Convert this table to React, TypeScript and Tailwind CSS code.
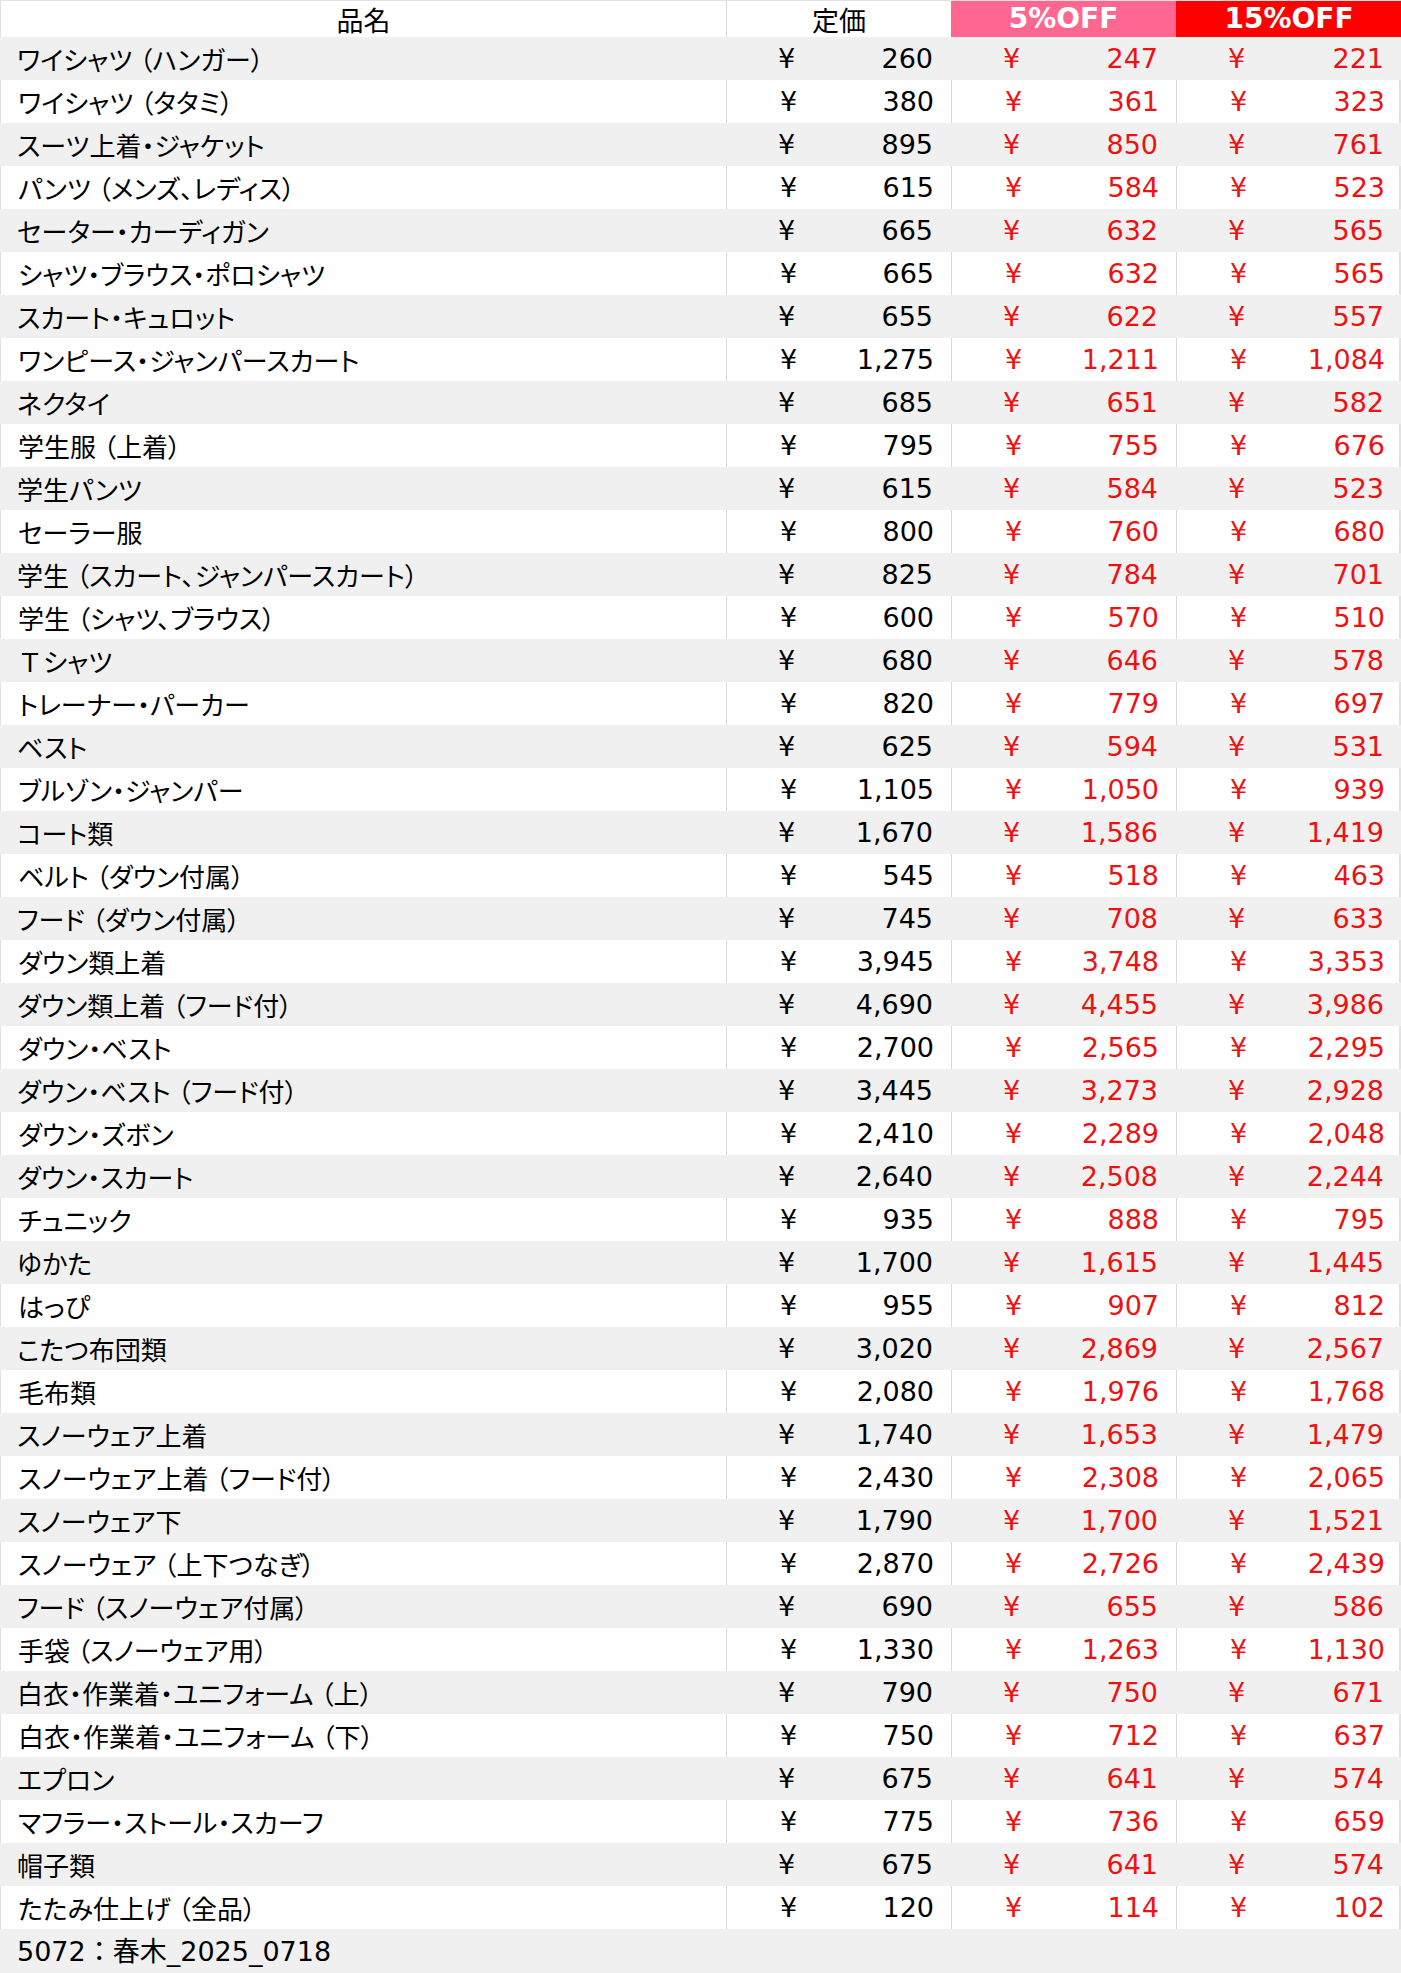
import React from "react";

type Row = [string, string, string, string];

const rows: Row[] = [
  ["ワイシャツ（ハンガー）", "260", "247", "221"],
  ["ワイシャツ（タタミ）", "380", "361", "323"],
  ["スーツ上着・ジャケット", "895", "850", "761"],
  ["パンツ（メンズ、レディス）", "615", "584", "523"],
  ["セーター・カーディガン", "665", "632", "565"],
  ["シャツ・ブラウス・ポロシャツ", "665", "632", "565"],
  ["スカート・キュロット", "655", "622", "557"],
  ["ワンピース・ジャンパースカート", "1,275", "1,211", "1,084"],
  ["ネクタイ", "685", "651", "582"],
  ["学生服（上着）", "795", "755", "676"],
  ["学生パンツ", "615", "584", "523"],
  ["セーラー服", "800", "760", "680"],
  ["学生（スカート、ジャンパースカート）", "825", "784", "701"],
  ["学生（シャツ、ブラウス）", "600", "570", "510"],
  ["Ｔシャツ", "680", "646", "578"],
  ["トレーナー・パーカー", "820", "779", "697"],
  ["ベスト", "625", "594", "531"],
  ["ブルゾン・ジャンパー", "1,105", "1,050", "939"],
  ["コート類", "1,670", "1,586", "1,419"],
  ["ベルト（ダウン付属）", "545", "518", "463"],
  ["フード（ダウン付属）", "745", "708", "633"],
  ["ダウン類上着", "3,945", "3,748", "3,353"],
  ["ダウン類上着（フード付）", "4,690", "4,455", "3,986"],
  ["ダウン・ベスト", "2,700", "2,565", "2,295"],
  ["ダウン・ベスト（フード付）", "3,445", "3,273", "2,928"],
  ["ダウン・ズボン", "2,410", "2,289", "2,048"],
  ["ダウン・スカート", "2,640", "2,508", "2,244"],
  ["チュニック", "935", "888", "795"],
  ["ゆかた", "1,700", "1,615", "1,445"],
  ["はっぴ", "955", "907", "812"],
  ["こたつ布団類", "3,020", "2,869", "2,567"],
  ["毛布類", "2,080", "1,976", "1,768"],
  ["スノーウェア上着", "1,740", "1,653", "1,479"],
  ["スノーウェア上着（フード付）", "2,430", "2,308", "2,065"],
  ["スノーウェア下", "1,790", "1,700", "1,521"],
  ["スノーウェア（上下つなぎ）", "2,870", "2,726", "2,439"],
  ["フード（スノーウェア付属）", "690", "655", "586"],
  ["手袋（スノーウェア用）", "1,330", "1,263", "1,130"],
  ["白衣・作業着・ユニフォーム（上）", "790", "750", "671"],
  ["白衣・作業着・ユニフォーム（下）", "750", "712", "637"],
  ["エプロン", "675", "641", "574"],
  ["マフラー・ストール・スカーフ", "775", "736", "659"],
  ["帽子類", "675", "641", "574"],
  ["たたみ仕上げ（全品）", "120", "114", "102"],
];

const jp = "font-['Noto_Sans_CJK_JP',sans-serif] [font-feature-settings:'palt']";
const num = "font-['DejaVu_Sans','Noto_Sans_CJK_JP',sans-serif]";

function Name({ text }: { text: string }) {
  const parts = text.split(/(（|Ｔ)/);
  return (
    <>
      {parts.map((p, i) =>
        p === "（" ? (
          <span key={i} className="ml-[7px]">
            {p}
          </span>
        ) : p === "Ｔ" ? (
          <span key={i} className="[font-feature-settings:normal]">
            {p}
          </span>
        ) : (
          <span key={i}>{p}</span>
        )
      )}
    </>
  );
}

function Price({ value, red, border }: { value: string; red?: boolean; border: boolean }) {
  return (
    <div
      className={`flex items-center justify-between pl-[53px] pr-[17px] text-[27px] leading-none ${num} ${
        red ? "text-[#ee1111]" : "text-black"
      } ${border ? "border-l border-[#dadada]" : ""}`}
    >
      <span>¥</span>
      <span>{value}</span>
    </div>
  );
}

export default function App() {
  return (
    <div className="w-[1401px] h-[1973px] bg-[#f0f0f0] flex flex-col">
      <div className="grid grid-cols-[725px_225px_225px_226px] h-[37px] bg-white border-t border-[#e2e2e2] border-l border-r-2">
        <div className={`flex items-center justify-center text-[27px] leading-none text-black ${jp}`}>品名</div>
        <div className={`flex items-center justify-center text-[27px] leading-none text-black border-l border-[#dadada] ${jp}`}>
          定価
        </div>
        <div className={`flex items-center justify-center bg-[#ff6690] text-white font-bold text-[28px] leading-none ${num}`}>
          5%OFF
        </div>
        <div className={`flex items-center justify-center bg-[#ff0000] text-white font-bold text-[28px] leading-none ${num}`}>
          15%OFF
        </div>
      </div>
      {rows.map((r, i) => {
        const gray = i % 2 === 0;
        return (
          <div
            key={i}
            className={`grid grid-cols-[725px_225px_225px_226px] h-[43px] ${
              gray ? "bg-[#f0f0f0]" : "bg-white border-l border-r-2 border-[#e2e2e2]"
            }`}
          >
            <div className={`flex items-center pl-[17px] text-[26px] leading-none text-black ${jp}`}>
              <Name text={r[0]} />
            </div>
            <Price value={r[1]} border={!gray} />
            <Price value={r[2]} red border={!gray} />
            <Price value={r[3]} red border={!gray} />
          </div>
        );
      })}
      <div className={`flex items-center h-[44px] pl-[17px] text-[27px] leading-none text-black ${num}`}>
        5072：春木_2025_0718
      </div>
    </div>
  );
}
